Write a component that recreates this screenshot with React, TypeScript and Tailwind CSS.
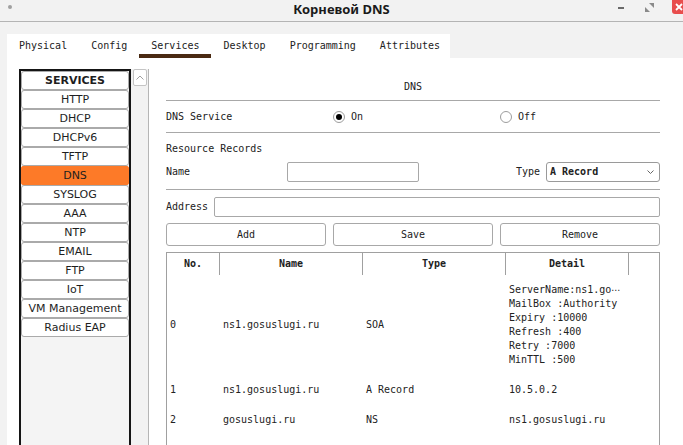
export default function App() {
  const services = [
    "HTTP",
    "DHCP",
    "DHCPv6",
    "TFTP",
    "DNS",
    "SYSLOG",
    "AAA",
    "NTP",
    "EMAIL",
    "FTP",
    "IoT",
    "VM Management",
    "Radius EAP",
  ];
  const tabs = ["Physical", "Config", "Services", "Desktop", "Programming", "Attributes"];
  const cols = "grid grid-cols-[53px_143px_143px_123px_1fr]";
  return (
    <div className="w-[683px] h-[445px] overflow-hidden bg-[#f2f2f2] flex flex-col text-[#1e1e1e]">
      {/* title bar */}
      <div className="h-[22px] shrink-0 border-b border-[#b4b4b4] grid grid-cols-[1fr_auto_1fr] items-start">
        <div className="pl-[8px] pt-[5px]">
          <div className="w-[4px] h-[4px] rounded-full bg-[#a0a0a0]" />
        </div>
        <div className="pt-[1px] text-[13px] leading-[16px] font-bold font-['Noto_Sans',sans-serif] text-[#1a1a1a]">
          Корневой DNS
        </div>
        <div className="flex justify-end items-start mr-[-3px]">
          <div className="mt-[7px] w-[6px] h-[2px] bg-[#6a6a6a]" />
          <svg className="mt-[3px] ml-[21px]" width="9" height="9" viewBox="0 0 9 9">
            <polygon points="4,0 9,0 9,5" fill="#8a8a8a" />
            <polygon points="0,4 0,9 5,9" fill="#8a8a8a" />
          </svg>
          <div className="ml-[18px] w-[14px] h-[14px] bg-[#e84d4d] rounded-bl-[3px] flex items-center justify-center">
            <svg width="8" height="8" viewBox="0 0 8 8">
              <path d="M1 1L7 7M7 1L1 7" stroke="#fff" strokeWidth="1.8" />
            </svg>
          </div>
        </div>
      </div>

      {/* tabs */}
      <div className="mt-[12px] ml-[7px] w-[443px] h-[24px] bg-white flex shrink-0 font-['DejaVu_Sans_Mono',monospace] text-[10px] leading-[14px] text-[#222]">
        {tabs.map((t) => (
          <div
            key={t}
            className={
              t === "Services"
                ? "px-[12px] pt-[4px] flex items-center border-b-4 border-[#4a2a12]"
                : "px-[12px] pt-[4px] flex items-center border-b-4 border-transparent"
            }
          >
            {t}
          </div>
        ))}
      </div>

      {/* content */}
      <div className="flex-1 ml-[7px] bg-white flex min-h-0">
        {/* sidebar */}
        <div className="flex pl-[12px] pt-[11px] shrink-0">
          <div className="w-[112px] border-2 border-[#151515] border-b-0 bg-[#f4f4f4] flex flex-col font-['DejaVu_Sans',sans-serif] text-[11px] leading-[13px]">
            <div className="h-[19px] bg-white border border-[#aaaaaa] rounded-[3px] flex items-center justify-center font-bold">
              SERVICES
            </div>
            {services.map((s) => (
              <div
                key={s}
                className={
                  s === "DNS"
                    ? "h-[19px] bg-[#fd7a28] border border-[#fd7a28] rounded-[2px] flex items-center justify-center"
                    : "h-[19px] bg-white border border-[#aaaaaa] rounded-[3px] flex items-center justify-center"
                }
              >
                {s}
              </div>
            ))}
          </div>
          <div className="w-[18px] bg-[#f2f2f2] border-r border-[#b5b5b5] flex flex-col">
            <div className="ml-[2px] mr-[1px] h-[17px] bg-white border border-[#c4c4c4] rounded-[2px] flex items-center justify-center">
              <svg width="8" height="5" viewBox="0 0 8 5">
                <path d="M0.5 4.5L4 1L7.5 4.5" stroke="#a0a0a0" fill="none" strokeWidth="1" />
              </svg>
            </div>
          </div>
        </div>

        {/* main */}
        <div className="ml-[17px] w-[494px] flex flex-col font-['DejaVu_Sans_Mono',monospace] text-[10px] leading-[14px] text-[#222]">
          <div className="pt-[22px] text-center">DNS</div>
          <div className="mt-[6px] h-px bg-[#a8a8a8]" />
          <div className="h-[31px] grid grid-cols-3 gap-[7px] items-center">
            <div>DNS Service</div>
            <div className="flex items-center">
              <div className="w-[12px] h-[12px] rounded-full border border-[#9d9d9d] bg-white flex items-center justify-center">
                <div className="w-[6px] h-[6px] rounded-full bg-black" />
              </div>
              <span className="ml-[6px]">On</span>
            </div>
            <div className="flex items-center">
              <div className="w-[12px] h-[12px] rounded-full border border-[#9d9d9d] bg-white" />
              <span className="ml-[6px]">Off</span>
            </div>
          </div>
          <div className="h-px bg-[#a8a8a8]" />
          <div className="pt-[9px]">Resource Records</div>
          <div className="mt-[6px] h-[20px] flex items-center">
            <div className="w-[121px]">Name</div>
            <div className="w-[132px] h-[20px] border border-[#a8a8a8] rounded-[2px] bg-white" />
            <div className="flex-1" />
            <div>Type</div>
            <div className="ml-[6px] w-[114px] h-[20px] border border-[#9a9a9a] rounded-[3px] bg-white flex items-center pl-[3px] pr-[5px] font-bold">
              <span className="flex-1">A Record</span>
              <svg width="7" height="4" viewBox="0 0 7 4">
                <path d="M0.5 0.5L3.5 3.5L6.5 0.5" stroke="#666" fill="none" strokeWidth="1" />
              </svg>
            </div>
          </div>
          <div className="mt-[7px] h-px bg-[#a8a8a8]" />
          <div className="mt-[7px] h-[20px] flex items-center">
            <div className="w-[48px]">Address</div>
            <div className="flex-1 h-[20px] border border-[#a8a8a8] rounded-[2px] bg-white" />
          </div>
          <div className="mt-[6px] h-[23px] grid grid-cols-3 gap-[7px]">
            {["Add", "Save", "Remove"].map((b) => (
              <div
                key={b}
                className="border border-[#a8a8a8] rounded-[3px] bg-white flex items-center justify-center"
              >
                {b}
              </div>
            ))}
          </div>
          <div className="mt-[6px] flex-1 border border-b-0 border-[#a0a0a0] flex flex-col">
            <div className={`${cols} h-[22px] font-bold`}>
              <div className="border-r border-[#a0a0a0] flex items-center justify-center">No.</div>
              <div className="border-r border-[#a0a0a0] flex items-center justify-center">Name</div>
              <div className="border-r border-[#a0a0a0] flex items-center justify-center">Type</div>
              <div className="border-r border-[#a0a0a0] flex items-center justify-center">Detail</div>
              <div />
            </div>
            <div className={`${cols} pt-[8px] pb-[10px] items-center`}>
              <div className="pl-[3px]">0</div>
              <div className="pl-[3px]">ns1.gosuslugi.ru</div>
              <div className="pl-[3px]">SOA</div>
              <div className="pl-[3px] flex flex-col whitespace-nowrap">
                <span>
                  ServerName:ns1.go
                  <span className="font-['DejaVu_Sans',sans-serif] text-[9px]">⋯</span>
                </span>
                <span>MailBox :Authority</span>
                <span>Expiry :10000</span>
                <span>Refresh :400</span>
                <span>Retry :7000</span>
                <span>MinTTL :500</span>
              </div>
              <div />
            </div>
            <div className={`${cols} h-[26px] items-center`}>
              <div className="pl-[3px]">1</div>
              <div className="pl-[3px]">ns1.gosuslugi.ru</div>
              <div className="pl-[3px]">A Record</div>
              <div className="pl-[3px]">10.5.0.2</div>
              <div />
            </div>
            <div className={`${cols} pt-[10px] items-center`}>
              <div className="pl-[3px]">2</div>
              <div className="pl-[3px]">gosuslugi.ru</div>
              <div className="pl-[3px]">NS</div>
              <div className="pl-[3px]">ns1.gosuslugi.ru</div>
              <div />
            </div>
          </div>
        </div>
      </div>
    </div>
  );
}
